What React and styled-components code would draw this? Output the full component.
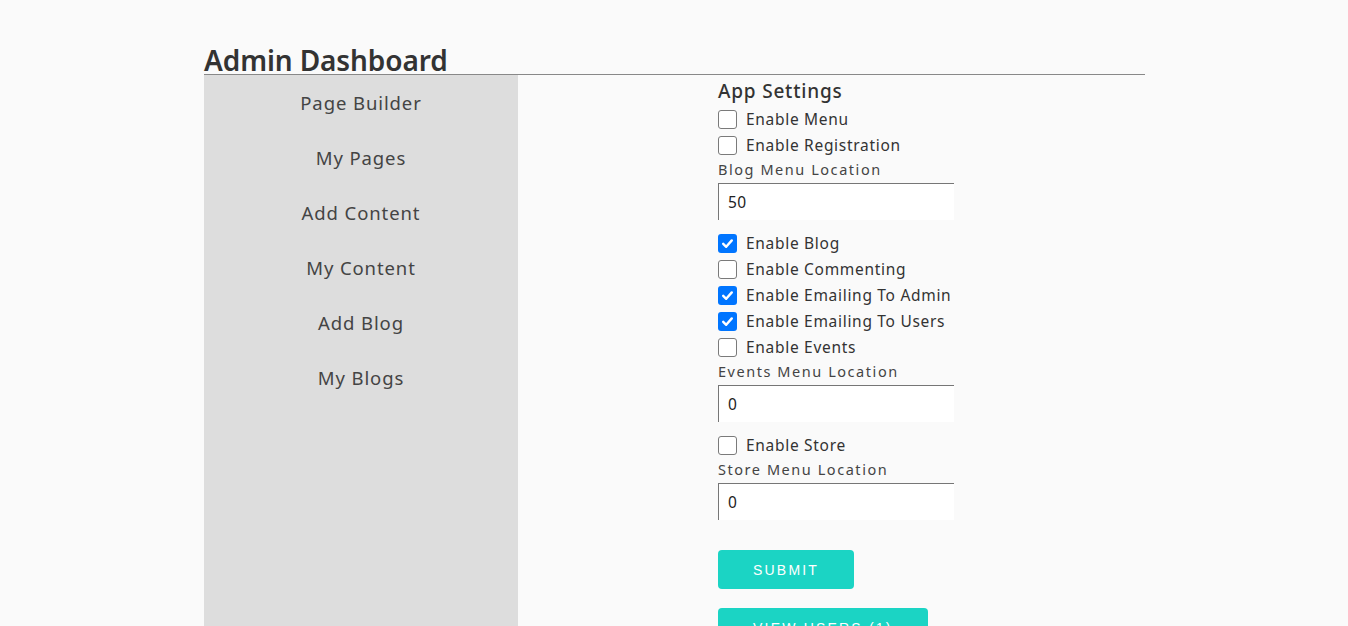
import React from "react";
import styled, { createGlobalStyle } from "styled-components";

const Global = createGlobalStyle`
  html, body { margin: 0; padding: 0; background: #fafafa; }
  body { font-family: "Noto Sans", "DejaVu Sans", sans-serif; color: #333; }
`;

const Page = styled.div`
  width: 941px;
  margin: 0 auto;
  padding-top: 46px;
  padding-left: 1px;
`;

const Title = styled.h1`
  margin: 0;
  font-size: 28px;
  font-weight: 600;
  line-height: 28px;
  color: #333;
  border-bottom: 1px solid #888;
  letter-spacing: -0.1px;
`;

const Body = styled.div`
  display: flex;
  align-items: stretch;
  min-height: 560px;
`;

const Sidebar = styled.nav`
  width: 314px;
  background: #dddddd;
  display: flex;
  flex-direction: column;
`;

const NavItem = styled.a`
  display: block;
  text-align: center;
  font-size: 18.5px;
  letter-spacing: 0.9px;
  line-height: 55px;
  height: 55px;
  color: #444;
  text-decoration: none;
`;

const Main = styled.main`
  flex: 1;
  padding-left: 200px;
  padding-top: 4px;
`;

const Form = styled.form`
  width: 236px;
  display: flex;
  flex-direction: column;
`;

const Heading = styled.h2`
  margin: 0 0 3px;
  font-size: 19px;
  font-weight: 500;
  letter-spacing: 0.8px;
  line-height: 24px;
  color: #333;
`;

const CheckRow = styled.label`
  display: flex;
  align-items: center;
  gap: 9px;
  height: 26px;
  font-size: 15.5px;
  letter-spacing: 0.7px;
  color: #333;
  white-space: nowrap;
`;

const Box = styled.span`
  width: 19px;
  height: 19px;
  box-sizing: border-box;
  border-radius: 3px;
  border: ${(p) => (p.$on ? "none" : "1px solid #7a7a7a")};
  background: ${(p) => (p.$on ? "#0075ff" : "#fff")};
  display: flex;
  align-items: center;
  justify-content: center;
  flex: none;
`;

const FieldLabel = styled.div`
  font-size: 14.5px;
  letter-spacing: 1.55px;
  line-height: 23px;
  margin-bottom: 2px;
  color: #444;
`;

const Input = styled.div`
  height: 37px;
  box-sizing: border-box;
  background: #fff;
  border-top: 1px solid #767676;
  border-left: 1px solid #767676;
  padding-left: 9px;
  display: flex;
  align-items: center;
  font-size: 15.5px;
  letter-spacing: 0.5px;
  color: #222;
  margin-bottom: 10px;
`;

const Button = styled.button`
  align-self: flex-start;
  background: #1bd4c4;
  color: #fff;
  border: none;
  border-radius: 4px;
  height: 39px;
  padding: 0 ${(p) => p.$pad}px;
  font-family: "Liberation Sans", Arial, sans-serif;
  font-size: 14px;
  letter-spacing: 2.2px;
  text-transform: uppercase;
  margin-top: ${(p) => p.$top}px;
`;

function Check({ on, children }) {
  return (
    <CheckRow>
      <Box $on={on}>
        {on && (
          <svg width="13" height="13" viewBox="0 0 13 13">
            <path d="M2.2 6.8 L5.2 9.8 L10.8 3.4" fill="none" stroke="#fff" strokeWidth="2.4" strokeLinecap="round" strokeLinejoin="round" />
          </svg>
        )}
      </Box>
      {children}
    </CheckRow>
  );
}

export default function App() {
  const nav = ["Page Builder", "My Pages", "Add Content", "My Content", "Add Blog", "My Blogs"];
  return (
    <>
      <Global />
      <Page>
        <Title>Admin Dashboard</Title>
        <Body>
          <Sidebar>
            {nav.map((n) => (
              <NavItem key={n}>{n}</NavItem>
            ))}
          </Sidebar>
          <Main>
            <Form onSubmit={(e) => e.preventDefault()}>
              <Heading>App Settings</Heading>
              <Check>Enable Menu</Check>
              <Check>Enable Registration</Check>
              <FieldLabel>Blog Menu Location</FieldLabel>
              <Input>50</Input>
              <Check on>Enable Blog</Check>
              <Check>Enable Commenting</Check>
              <Check on>Enable Emailing To Admin</Check>
              <Check on>Enable Emailing To Users</Check>
              <Check>Enable Events</Check>
              <FieldLabel>Events Menu Location</FieldLabel>
              <Input>0</Input>
              <Check>Enable Store</Check>
              <FieldLabel>Store Menu Location</FieldLabel>
              <Input>0</Input>
              <Button $pad={35} $top={20}>Submit</Button>
              <Button $pad={35} $top={19}>View Users (1)</Button>
            </Form>
          </Main>
        </Body>
      </Page>
    </>
  );
}
